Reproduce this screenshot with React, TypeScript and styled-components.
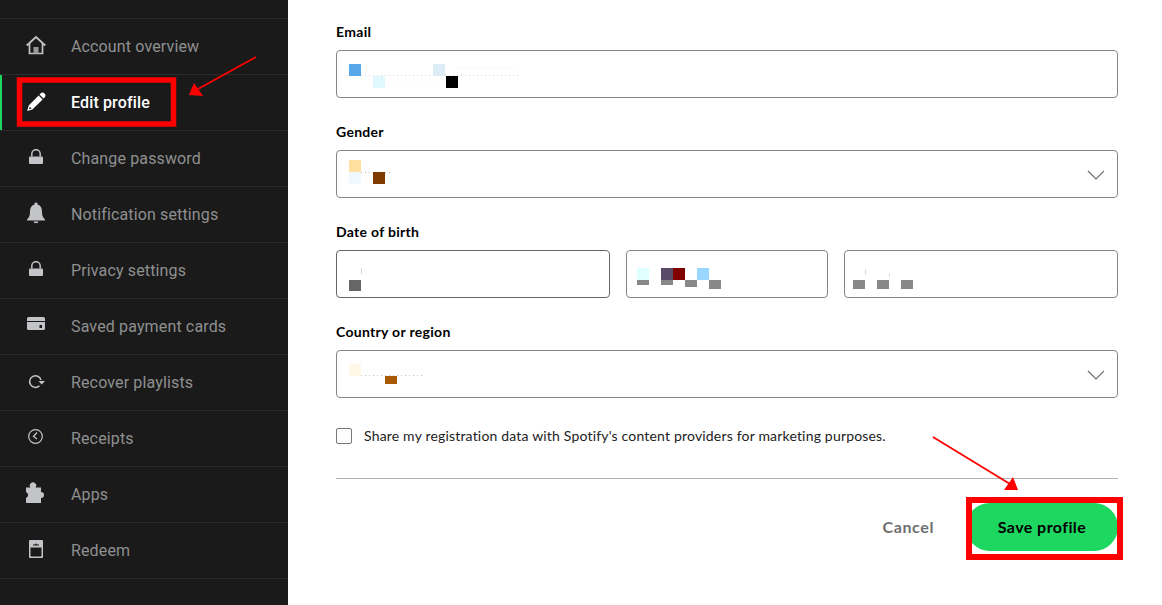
import React from 'react';
import styled, { createGlobalStyle } from 'styled-components';

const GlobalStyle = createGlobalStyle`
    html, body {
        margin: 0;
        padding: 0;
        height: 605px;
        overflow: hidden;
        background: #fff;
    }
`;

const Page = styled.div`
    position: relative;
    display: flex;
    width: 1162px;
    height: 605px;
    overflow: hidden;
`;

const Sidebar = styled.nav`
    width: 288px;
    flex-shrink: 0;
    background: #1a1a1a;
    padding-top: 18px;
    box-sizing: border-box;
`;

const NavRow = styled.a<{ $active?: boolean }>`
    display: flex;
    align-items: center;
    box-sizing: border-box;
    height: 56px;
    padding-left: 24px;
    border-top: 1px solid #2b2b2b;
    box-shadow: ${props => (props.$active ? 'inset 2px 0 0 #1ed760' : 'none')};
    color: ${props => (props.$active ? '#fff' : '#8f9090')};
    font-family: Roboto, "Liberation Sans", sans-serif;
    font-size: 16px;
    font-weight: ${props => (props.$active ? 500 : 400)};
    letter-spacing: 0.14px;

    &:last-child {
        height: 57px;
        border-bottom: 1px solid #2b2b2b;
    }
`;

const NavIcon = styled.svg<{ $active?: boolean }>`
    width: 24px;
    height: 24px;
    margin: 0 23px 1px 0;
    flex-shrink: 0;
    fill: ${props => (props.$active ? '#fff' : '#c3c4c7')};
    stroke: none;
`;

const Main = styled.main`
    width: 782px;
    margin-left: 48px;
    padding-top: 24px;
    font-family: Lato, "Liberation Sans", sans-serif;
    color: #000;
`;

const Group = styled.div`
    margin-bottom: 26px;
`;

const Label = styled.label`
    display: block;
    height: 16px;
    margin-bottom: 10px;
    font-size: 14px;
    font-weight: 700;
    letter-spacing: 0.3px;
    line-height: 16px;
`;

const Field = styled.div<{ $dark?: boolean }>`
    display: flex;
    align-items: center;
    justify-content: space-between;
    box-sizing: border-box;
    height: 48px;
    padding: 0 13px 0 12px;
    border: 1px solid ${props => (props.$dark ? '#666' : '#858585')};
    border-radius: 4px;
    background: #fff;
`;

const DateRow = styled.div`
    display: grid;
    grid-template-columns: 274px 202px 274px;
    column-gap: 16px;
`;

const Marks = styled.svg<{ $shift?: number }>`
    width: 200px;
    height: 46px;
    flex-shrink: 0;
    margin-left: ${props => props.$shift ?? 0}px;
`;

const Chevron = styled.svg`
    width: 18px;
    height: 12px;
    fill: none;
    stroke: #6e6e6e;
    stroke-width: 1.2;
`;

const ConsentRow = styled.div`
    display: flex;
    align-items: center;
    height: 16px;
    margin-top: 29px;
    font-size: 14px;
    letter-spacing: 0.18px;
    color: #222;
`;

const Box = styled.span`
    width: 16px;
    height: 16px;
    box-sizing: border-box;
    margin: 2px 12px 0 0;
    border: 1px solid #767676;
    border-radius: 2px;
    flex-shrink: 0;
`;

const Divider = styled.hr`
    margin: 35px 0 24px;
    border: 0;
    border-top: 1px solid #b3b3b3;
`;

const Actions = styled.div`
    display: flex;
    align-items: center;
    justify-content: flex-end;
`;

const CancelButton = styled.button`
    margin-right: 32px;
    padding: 0 0 2px;
    border: 0;
    background: none;
    font-family: inherit;
    font-size: 16px;
    font-weight: 700;
    letter-spacing: 0.6px;
    color: #6f6f6f;
`;

const SaveButton = styled.button`
    width: 152px;
    height: 48px;
    padding: 0 0 2px;
    border: 0;
    border-radius: 24px;
    background: #1ed760;
    font-family: inherit;
    font-size: 16px;
    font-weight: 700;
    letter-spacing: 0.43px;
    color: #000;
`;

const Annotations = styled.svg`
    position: absolute;
    top: 0;
    left: 0;
    width: 1162px;
    height: 605px;
    pointer-events: none;
`;

const lockIcon = (
    <>
        <path d="M7.800 10.500V8a4.200 4.200 0 0 1 8.400 0v2.500" fill="none" stroke="#c3c4c7" strokeWidth="1.500" />
        <path d="M6 10.500h12a1 1 0 0 1 1 1V17a1 1 0 0 1-1 1H6a1 1 0 0 1-1-1v-5.500a1 1 0 0 1 1-1z" />
    </>
);

const navItems: { label: string; active?: boolean; icon: React.ReactNode }[] = [
    {
        label: 'Account overview',
        icon: (
            <>
                <path d="M2.700 11.500 12 3l9.300 8.500M5.500 9.500v10h13v-10" fill="none" stroke="#c3c4c7" strokeWidth="1.700" />
                <path d="M9.500 13h5v6.500h-5z" fill="#9a9a9a" />
            </>
        ),
    },
    {
        label: 'Edit profile',
        active: true,
        icon: (
            <>
                <path d="M16.500 3.500a2.800 2.800 0 0 1 4 4l-1 1-4-4z" />
                <path fillRule="evenodd" d="M14.600 5.400l4 4-10.200 10-5.200 1.600 1.500-5.400zM5.800 16.700 5 19.300l2.600-.8z" />
            </>
        ),
    },
    { label: 'Change password', icon: lockIcon },
    {
        label: 'Notification settings',
        icon: (
            <>
                <path d="M12 .5a1.500 1.500 0 0 1 1.500 1.900C17 3.400 18 6.500 18 10c0 3.500 1 5.800 3 7.500v1H3v-1C5 15.800 6 13.500 6 10c0-3.500 1-6.600 4.500-7.600A1.500 1.500 0 0 1 12 .5z" />
                <path d="M9.500 19.500h5a2.500 1.700 0 0 1-5 0z" />
            </>
        ),
    },
    { label: 'Privacy settings', icon: lockIcon },
    {
        label: 'Saved payment cards',
        icon: (
            <>
                <path d="M4.500 3h15A1.500 1.500 0 0 1 21 4.500V7H3V4.500A1.500 1.500 0 0 1 4.500 3z" />
                <path fillRule="evenodd" d="M3 8h18v6.500a1.500 1.500 0 0 1-1.500 1.500h-15A1.500 1.500 0 0 1 3 14.500zM15.500 11v3H18v-3z" />
            </>
        ),
    },
    {
        label: 'Recover playlists',
        icon: (
            <>
                <path d="M17 10a5.800 5.800 0 1 0-1.500 5.700" fill="none" stroke="#c3c4c7" strokeWidth="1.500" />
                <path d="M14.500 11H21l-3.300 3.500z" />
            </>
        ),
    },
    {
        label: 'Receipts',
        icon: (
            <>
                <circle cx="11.500" cy="10.500" r="6.800" fill="none" stroke="#c3c4c7" strokeWidth="1.200" />
                <path d="M13 6.500 9.500 10.500 13 13" fill="none" stroke="#c3c4c7" strokeWidth="1.300" />
            </>
        ),
    },
    {
        label: 'Apps',
        icon: <path d="M2 5.500h4.500a3.200 3.200 0 1 1 5 0H17V10a3 3 0 1 1 0 6v5H2v-5a3.200 3.200 0 0 0 0-6z" />,
    },
    {
        label: 'Redeem',
        icon: <path fillRule="evenodd" d="M6 2h12a1 1 0 0 1 1 1v16a1 1 0 0 1-1 1H6a1 1 0 0 1-1-1V3a1 1 0 0 1 1-1zM6.500 9.500v8.200c0 .4.300.8.800.8h9.400c.5 0 .8-.4.8-.8V9.500zM9 6.500v1h6v-1h-2l-1-1.300-1 1.300z" />,
    },
];

type Mark = [number, number, number, number, string];
type Dots = [number, number, number, string];

// blurred out personal data, coords are relative to the field content box
const emailMarks: Mark[] = [
    [0, 13, 12, 12, '#56a8ea'], [24, 25, 12, 12, '#e0f9ff'], [84, 13, 12, 12, '#dcedf6'], [97, 25, 12, 12, '#000'],
];
const emailDots: Dots[] = [[12, 24.5, 160, '#d8cfcc'], [40, 31, 60, '#eeeeee'], [110, 17, 60, '#eeeeee']];
const genderMarks: Mark[] = [
    [0, 9, 12, 12, '#ffe0a0'], [0, 21, 12, 12, '#f0f8ff'], [24, 21, 12, 12, '#7f3a00'],
];
const genderDots: Dots[] = [[12, 21.5, 30, '#bdb2ae']];
const dayMarks: Mark[] = [
    [12, 17, 1, 6, '#d5d5d5'], [0, 29, 12, 11, '#666'],
];
const monthMarks: Mark[] = [
    [0, 17, 12, 12, '#e0ffff'], [0, 29, 12, 5, '#888'], [24, 17, 12, 12, '#5a4a6a'], [24, 29, 12, 5, '#888'],
    [36, 17, 12, 12, '#800000'], [48, 29, 12, 7, '#888'], [60, 17, 12, 12, '#99d6ff'], [72, 29, 12, 9, '#888'],
];
const yearMarks: Mark[] = [
    [0, 29, 12, 9, '#888'], [24, 29, 12, 9, '#888'], [48, 29, 12, 9, '#888'], [12, 18, 1, 6, '#ddd'], [36, 22, 1, 4, '#ddd'],
];
const countryMarks: Mark[] = [
    [0, 13, 12, 12, '#fff8e8'], [36, 25, 12, 8, '#a85a00'],
];
const countryDots: Dots[] = [[12, 24.5, 62, '#c9bfba']];

function Redacted({ marks, dots = [], shift }: { marks: Mark[]; dots?: Dots[]; shift?: number }) {
    return (
        <Marks viewBox="0 0 200 46" $shift={shift}>
            {dots.map(([x, y, length, color], i) => (
                <line key={i} x1={x} y1={y} x2={x + length} y2={y} stroke={color} strokeDasharray="1 3" />
            ))}
            {marks.map(([x, y, w, h, color], i) => (
                <rect key={i} x={x} y={y} width={w} height={h} fill={color} />
            ))}
        </Marks>
    );
}

function Down() {
    return (
        <Chevron viewBox="0 0 18 12">
            <path d="M2 3l8 8 8-8" />
        </Chevron>
    );
}

export default function App() {
    return (
        <Page>
            <GlobalStyle />
            <Sidebar>
                {navItems.map(item => (
                    <NavRow key={item.label} $active={item.active}>
                        <NavIcon viewBox="0 0 24 24" $active={item.active}>{item.icon}</NavIcon>
                        {item.label}
                    </NavRow>
                ))}
            </Sidebar>
            <Main>
                <Group>
                    <Label>Email</Label>
                    <Field><Redacted marks={emailMarks} dots={emailDots} /></Field>
                </Group>
                <Group>
                    <Label>Gender</Label>
                    <Field><Redacted marks={genderMarks} dots={genderDots} /><Down /></Field>
                </Group>
                <Group>
                    <Label>Date of birth</Label>
                    <DateRow>
                        <Field $dark><Redacted marks={dayMarks} /></Field>
                        <Field><Redacted marks={monthMarks} shift={-2} /><Down /></Field>
                        <Field><Redacted marks={yearMarks} shift={-4} /></Field>
                    </DateRow>
                </Group>
                <Group>
                    <Label>Country or region</Label>
                    <Field><Redacted marks={countryMarks} dots={countryDots} /><Down /></Field>
                </Group>
                <ConsentRow>
                    <Box />
                    Share my registration data with Spotify's content providers for marketing purposes.
                </ConsentRow>
                <Divider />
                <Actions>
                    <CancelButton>Cancel</CancelButton>
                    <SaveButton>Save profile</SaveButton>
                </Actions>
            </Main>
            <Annotations viewBox="0 0 1162 605">
                <rect x="19.500" y="80" width="154" height="44" fill="none" stroke="#f00" strokeWidth="5.500" />
                <path d="M256 57 198 89" stroke="#f00" strokeWidth="1.800" />
                <path d="M189 95 203 96 194 83z" fill="#f00" />
                <rect x="969" y="500" width="151" height="57" fill="none" stroke="#f00" strokeWidth="6" />
                <path d="M933 437 1010 484" stroke="#f00" strokeWidth="1.800" />
                <path d="M1013 477 1004 490 1018 490z" fill="#f00" />
            </Annotations>
        </Page>
    );
}
